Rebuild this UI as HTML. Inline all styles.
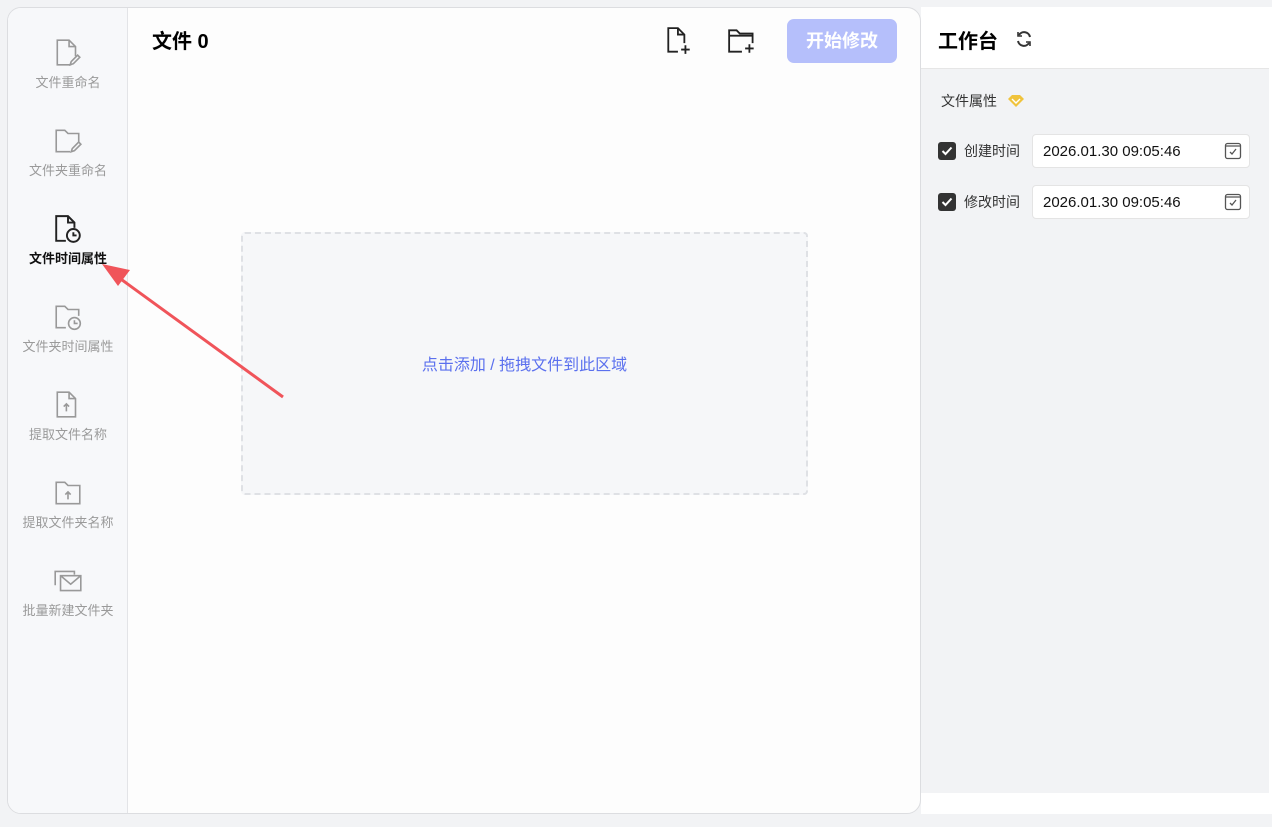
<!DOCTYPE html><html><head><meta charset="utf-8"><style>
*{margin:0;padding:0;box-sizing:border-box}
body{width:1272px;height:827px;background:#f2f3f5;font-family:"Liberation Sans","Noto Sans CJK SC",sans-serif;position:relative;overflow:hidden}
.card{position:absolute;left:7px;top:7px;width:914px;height:807px;background:#fdfdfd;border:1px solid #dcdde0;border-radius:14px;overflow:hidden}
.side{position:absolute;left:0;top:0;width:120px;height:100%;background:#f7f8fa;border-right:1px solid #e3e4e7}
.it{position:absolute;left:0;width:120px;text-align:center;font-size:13px;color:#9a9a9a}
.it svg{display:block;margin:0 auto 4px}
.it.on{color:#111;font-weight:bold}
.rp{position:absolute;left:921px;top:7px;width:351px;height:807px;background:#fff}
.rb{position:absolute;left:0;top:61px;width:348px;height:725px;background:#f2f3f5;border-top:1px solid #e6e6e6}
.row{position:absolute;left:17px;display:flex;align-items:center;font-size:14px;color:#333}
.cb{width:18px;height:18px;background:#333;border-radius:3px;margin-right:8px;display:flex;align-items:center;justify-content:center}
.inp{position:absolute;left:111px;width:218px;height:34px;background:#fff;border:1px solid #e4e4e4;border-radius:4px;font-size:15px;color:#111;padding:8px 10px;}
</style></head><body>
<div class="card">
 <div class="side">
  <div class="it" style="top:30px"><svg width="28" height="30" viewBox="0 0 26 28" fill="none" stroke="#999" stroke-width="1.5"><path d="M16 25H3V2h11l6 6v9"/><path d="M14 2v6h6"/><path d="M15 25l1-3 6-6 2 2-6 6z"/></svg>文件重命名</div>
  <div class="it" style="top:118px"><svg width="30" height="30" viewBox="0 0 28 28" fill="none" stroke="#999" stroke-width="1.5"><path d="M16 24H3V4h8l3 3h10v9"/><path d="M17 24l1-3 6-6 2 2-6 6z"/></svg>文件夹重命名</div>
  <div class="it on" style="top:206px"><svg width="30" height="30" viewBox="0 0 28 28" fill="none" stroke="#222" stroke-width="1.8"><path d="M12 25H3V2h11l6 6v5"/><path d="M14 2v6h6"/><circle cx="19" cy="20" r="6"/><path d="M19 17v3h3"/></svg>文件时间属性</div>
  <div class="it" style="top:294px"><svg width="30" height="30" viewBox="0 0 28 28" fill="none" stroke="#999" stroke-width="1.5"><path d="M12 24H3V4h8l3 3h10v6"/><circle cx="20" cy="20" r="5.5"/><path d="M20 17v3h3"/></svg>文件夹时间属性</div>
  <div class="it" style="top:382px"><svg width="28" height="30" viewBox="0 0 26 28" fill="none" stroke="#999" stroke-width="1.5"><path d="M3 2h11l6 6v17H3z"/><path d="M14 2v6h6"/><path d="M11.5 20v-7M9 15.5l2.5-2.5 2.5 2.5"/></svg>提取文件名称</div>
  <div class="it" style="top:470px"><svg width="30" height="30" viewBox="0 0 28 28" fill="none" stroke="#999" stroke-width="1.5"><path d="M3 4h8l3 3h11v17H3z"/><path d="M14 20v-7M11.5 15.5l2.5-2.5 2.5 2.5"/></svg>提取文件夹名称</div>
  <div class="it" style="top:558px"><svg width="32" height="30" viewBox="0 0 30 28" fill="none" stroke="#999" stroke-width="1.5"><path d="M3 18V5h18v3"/><path d="M8 9h19v14H8z"/><path d="M8 9l9.5 8L27 9"/></svg>批量新建文件夹</div>
 </div>
 <div style="position:absolute;left:144px;top:17px;font-size:20px;font-weight:bold;color:#000">文件 0</div>
 <svg style="position:absolute;left:657px;top:18px" width="28" height="30" viewBox="0 0 26 28" fill="none" stroke="#222" stroke-width="1.7"><path d="M12 24H3V2h9l6 6v8"/><path d="M12 2v6h6"/><path d="M19 18v8M15 22h8"/></svg>
 <svg style="position:absolute;left:719px;top:18px" width="32" height="30" viewBox="0 0 30 28" fill="none" stroke="#222" stroke-width="1.7"><path d="M14 24H2V4h7l3 3h12v9"/><path d="M2 9h22"/><path d="M21 17v8M17 21h8"/></svg>
 <div style="position:absolute;left:779px;top:11px;width:110px;height:44px;background:#b5bffb;border-radius:7px;color:#fff;font-size:18px;font-weight:bold;text-align:center;line-height:44px">开始修改</div>
 <div style="position:absolute;left:233px;top:224px;width:567px;height:263px;background:#f6f7f9;border:2px dashed #dfe1e5;border-radius:4px;text-align:center;line-height:264px;font-size:16px;color:#5b70ee">点击添加 / 拖拽文件到此区域</div>
</div>
<svg style="position:absolute;left:0;top:0" width="1272" height="827"><path d="M283 397L118 277" stroke="#f0545a" stroke-width="3"/><path d="M102 264L130 270L118 286Z" fill="#f0545a"/></svg>
<div class="rp">
 <div style="position:absolute;left:17px;top:18px;font-size:20px;font-weight:bold;color:#000">工作台</div>
 <svg style="position:absolute;left:94px;top:23px" width="18" height="18" viewBox="0 0 18 18" fill="none" stroke="#333" stroke-width="2"><path d="M15 7A6 6 0 0 0 4 5M3 11a6 6 0 0 0 11 2"/><path d="M3 2v4h4M15 16v-4h-4" stroke-width="1.6"/></svg>
 <div class="rb">
  <div style="position:absolute;left:20px;top:22px;font-size:14px;color:#333">文件属性</div>
  <svg style="position:absolute;left:86px;top:25px" width="18" height="14" viewBox="0 0 18 14"><path d="M1 5L5 1h8l4 4-8 8z" fill="#f0c33c"/><path d="M5 5l4 4 4-4" stroke="#fff" stroke-width="1.4" fill="none"/></svg>
  <div class="row" style="top:72px"><div class="cb"><svg width="12" height="10" viewBox="0 0 12 10"><path d="M1.5 5l3 3 6-6.5" stroke="#fff" stroke-width="2" fill="none"/></svg></div>创建时间</div>
  <div class="inp" style="top:65px">2026.01.30 09:05:46</div>
  <div class="row" style="top:123px"><div class="cb"><svg width="12" height="10" viewBox="0 0 12 10"><path d="M1.5 5l3 3 6-6.5" stroke="#fff" stroke-width="2" fill="none"/></svg></div>修改时间</div>
  <div class="inp" style="top:116px">2026.01.30 09:05:46</div>
  <svg style="position:absolute;left:303px;top:73px" width="18" height="18" viewBox="0 0 18 18" fill="none" stroke="#555" stroke-width="1.3"><rect x="1.5" y="1.5" width="15" height="15" rx="2"/><path d="M2 4h14M6 10l2 2 4-5"/></svg>
  <svg style="position:absolute;left:303px;top:124px" width="18" height="18" viewBox="0 0 18 18" fill="none" stroke="#555" stroke-width="1.3"><rect x="1.5" y="1.5" width="15" height="15" rx="2"/><path d="M2 4h14M6 10l2 2 4-5"/></svg>
 </div>
</div>
</body></html>
